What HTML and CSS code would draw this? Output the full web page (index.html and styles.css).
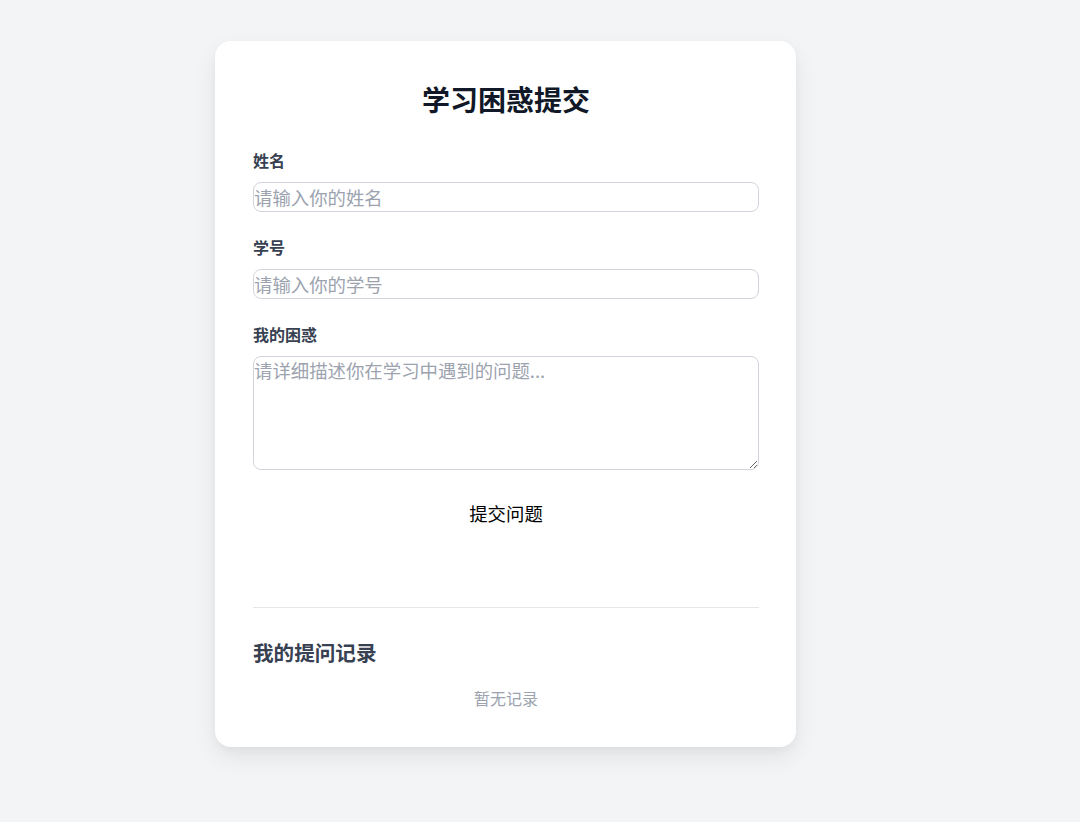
FILE: index.html
```html
<!DOCTYPE html>
<html lang="zh-CN">
<head>
<meta charset="utf-8">
<title>学习困惑提交</title>
<link rel="stylesheet" href="styles.css">
</head>
<body>
<div class="card">
  <h1 class="title">学习困惑提交</h1>
  <form class="form">
    <div class="field">
      <label class="label" for="name">姓名</label>
      <input class="input" id="name" type="text" placeholder="请输入你的姓名">
    </div>
    <div class="field">
      <label class="label" for="sid">学号</label>
      <input class="input" id="sid" type="text" placeholder="请输入你的学号">
    </div>
    <div class="field">
      <label class="label" for="q">我的困惑</label>
      <textarea class="textarea" id="q" placeholder="请详细描述你在学习中遇到的问题..."></textarea>
    </div>
    <div class="actions">
      <button class="submit" type="button">提交问题</button>
    </div>
  </form>
  <hr class="divider">
  <h2 class="subtitle">我的提问记录</h2>
  <p class="empty">暂无记录</p>
</div>
</body>
</html>
```
FILE: styles.css
```css
* { box-sizing: border-box; }
html, body { margin: 0; padding: 0; }
body {
  background: #f3f4f6;
  font-family: "Noto Sans CJK SC", "Noto Sans", sans-serif;
  min-height: 822px;
  padding: 41px 0 0 215px;
}
.card {
  width: 581px;
  background: #ffffff;
  border-radius: 16px;
  box-shadow: 0 10px 25px rgba(0, 0, 0, 0.07), 0 4px 10px rgba(0, 0, 0, 0.03);
  padding: 38px 37px 37px 38px;
}
.title {
  margin: 0 0 30px;
  font-size: 28px;
  line-height: 40px;
  font-weight: 700;
  color: #111827;
  text-align: center;
}
.form { display: flex; flex-direction: column; }
.field { display: flex; flex-direction: column; margin-bottom: 24px; }
.label {
  font-size: 16px;
  line-height: 22px;
  font-weight: 700;
  color: #374151;
  margin-bottom: 11px;
}
.input, .textarea {
  width: 100%;
  margin: 0;
  padding: 0;
  border: 1px solid #d1d5db;
  border-radius: 8px;
  font-family: inherit;
  font-size: 18.4px;
  color: #111827;
  background: #fff;
  outline: none;
}
.input { height: 30px; line-height: 26px; }
.textarea { height: 114px; line-height: 26px; resize: vertical; display: block; padding-top: 0; }
.input::placeholder, .textarea::placeholder { color: #9ca3af; }
.actions { display: flex; justify-content: center; margin-top: 6px; }
.submit {
  border: none;
  background: transparent;
  font-family: inherit;
  font-size: 18.4px;
  line-height: 26px;
  color: #000;
  padding: 0 6px;
  cursor: pointer;
}
.divider {
  border: none;
  border-top: 1px solid #e5e7eb;
  margin: 81px 0 0;
  height: 0;
}
.subtitle {
  margin: 30px 0 20px;
  font-size: 20.6px;
  line-height: 28px;
  font-weight: 700;
  color: #374151;
}
.empty {
  margin: 0;
  text-align: center;
  font-size: 16px;
  line-height: 24px;
  color: #9ca3af;
}
```
